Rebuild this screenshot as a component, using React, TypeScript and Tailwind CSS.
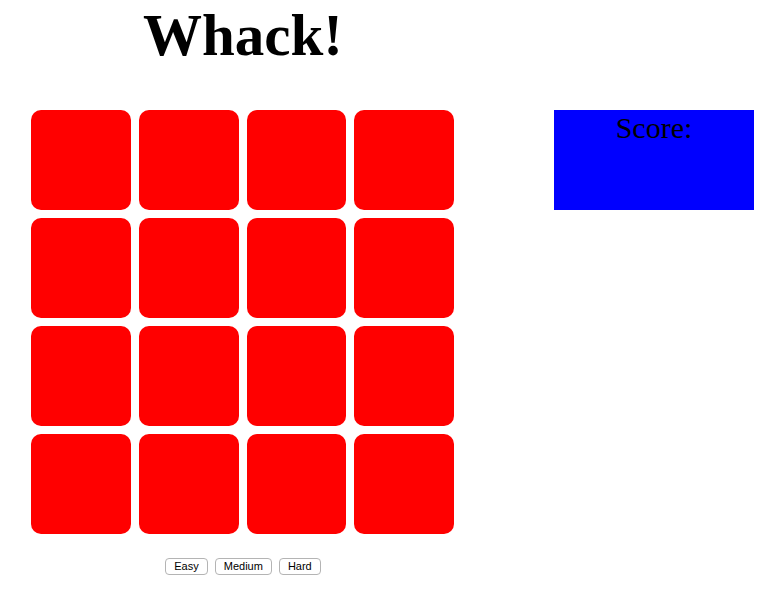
import React from 'react';

const serif = { fontFamily: '"Liberation Serif", "Times New Roman", serif' };

export default function App() {
  const holes = Array.from({ length: 16 }, (_, i) => i);

  return (
    <div className="flex w-[760px] h-[609px] bg-white pl-[27px]">
      {/* Board column */}
      <div className="w-[432px] flex flex-col">
        <div className="h-[106px] pt-[2px] flex justify-center">
          <h1 style={serif} className="text-[59px] font-bold leading-[1.15] text-black m-0">Whack!</h1>
        </div>

        <div className="grid grid-cols-4 w-[431px]">
          {holes.map(i => (
            <div key={i} className="m-[4px] h-[100px] rounded-[10px] bg-[#ff0000]" />
          ))}
        </div>

        <div className="mt-[20px] flex justify-center gap-[7px]" style={{ fontFamily: '"Liberation Sans", Arial, sans-serif' }}>
          {['Easy', 'Medium', 'Hard'].map(d => (
            <button key={d} className="h-[17px] px-[8px] text-[11px] leading-none bg-white text-black border border-[#b4b4b4] rounded-[4px]">
              {d}
            </button>
          ))}
        </div>
      </div>

      {/* Score */}
      <div className="ml-[95px] mt-[110px] w-[200px] h-[100px] bg-[#0000ff] flex justify-center">
        <div style={serif} className="text-[30px] leading-[1.15] text-black pt-[1px]">Score:</div>
      </div>
    </div>
  );
}
